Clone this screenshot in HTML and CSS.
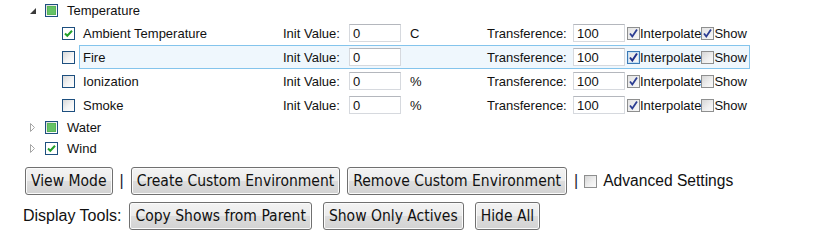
FILE: index.html
```html
<!DOCTYPE html>
<html lang="en">
<head>
<meta charset="UTF-8">
<title>Environment</title>
<link rel="stylesheet" href="styles.css">
</head>
<body>

<div class="tree">
  <div class="node">
    <div class="node-row">
      <span class="twisty"><svg width="6" height="6" viewBox="0 0 6 6"><polygon points="6,0 6,6 0,6" fill="#3a3a3a"/></svg></span>
      <span class="cb tree-cb"><span class="part"></span></span>
      <span class="node-name">Temperature</span>
    </div>
    <div class="children">
      <div class="env-row">
        <span class="cb tree-cb on"><svg width="11" height="11" viewBox="0 0 11 11"><path d="M2 5.5 L4.3 7.8 L9 2.8" fill="none" stroke="#23a02a" stroke-width="2"/></svg></span>
        <div class="env-box">
          <span class="env-name">Ambient Temperature</span>
          <span class="lbl">Init Value:</span>
          <input class="val" value="0">
          <span class="unit">C</span>
          <span class="lbl">Transference:</span>
          <input class="val" value="100">
          <span class="opts">
            <span class="cb std on"><svg width="11" height="11" viewBox="0 0 11 11"><path d="M2 5.5 L4.3 8.5 L9 1.5" fill="none" stroke="#2c3d92" stroke-width="1.8"/></svg></span>Interpolate<span class="cb std on"><svg width="11" height="11" viewBox="0 0 11 11"><path d="M2 5.5 L4.3 8.5 L9 1.5" fill="none" stroke="#2c3d92" stroke-width="1.8"/></svg></span>Show
          </span>
        </div>
      </div>
      <div class="env-row">
        <span class="cb tree-cb"></span>
        <div class="env-box sel">
          <span class="env-name">Fire</span>
          <span class="lbl">Init Value:</span>
          <input class="val" value="0">
          <span class="unit"></span>
          <span class="lbl">Transference:</span>
          <input class="val" value="100">
          <span class="opts">
            <span class="cb std on hot"><svg width="11" height="11" viewBox="0 0 11 11"><path d="M2 5.5 L4.3 8.5 L9 1.5" fill="none" stroke="#1f2f8a" stroke-width="2"/></svg></span>Interpolate<span class="cb std"></span>Show
          </span>
        </div>
      </div>
      <div class="env-row">
        <span class="cb tree-cb"></span>
        <div class="env-box">
          <span class="env-name">Ionization</span>
          <span class="lbl">Init Value:</span>
          <input class="val" value="0">
          <span class="unit">%</span>
          <span class="lbl">Transference:</span>
          <input class="val" value="100">
          <span class="opts">
            <span class="cb std on"><svg width="11" height="11" viewBox="0 0 11 11"><path d="M2 5.5 L4.3 8.5 L9 1.5" fill="none" stroke="#2c3d92" stroke-width="1.8"/></svg></span>Interpolate<span class="cb std"></span>Show
          </span>
        </div>
      </div>
      <div class="env-row">
        <span class="cb tree-cb"></span>
        <div class="env-box">
          <span class="env-name">Smoke</span>
          <span class="lbl">Init Value:</span>
          <input class="val" value="0">
          <span class="unit">%</span>
          <span class="lbl">Transference:</span>
          <input class="val" value="100">
          <span class="opts">
            <span class="cb std on"><svg width="11" height="11" viewBox="0 0 11 11"><path d="M2 5.5 L4.3 8.5 L9 1.5" fill="none" stroke="#2c3d92" stroke-width="1.8"/></svg></span>Interpolate<span class="cb std"></span>Show
          </span>
        </div>
      </div>
    </div>
  </div>
  <div class="node-row leaf">
    <span class="twisty"><svg width="6" height="9" viewBox="0 0 6 9"><polygon points="0.5,0.5 4.5,4.5 0.5,8.5" fill="#fff" stroke="#a6a6a6"/></svg></span>
    <span class="cb tree-cb"><span class="part"></span></span>
    <span class="node-name">Water</span>
  </div>
  <div class="node-row leaf">
    <span class="twisty"><svg width="6" height="9" viewBox="0 0 6 9"><polygon points="0.5,0.5 4.5,4.5 0.5,8.5" fill="#fff" stroke="#a6a6a6"/></svg></span>
    <span class="cb tree-cb on"><svg width="11" height="11" viewBox="0 0 11 11"><path d="M2 5.5 L4.3 7.8 L9 2.8" fill="none" stroke="#23a02a" stroke-width="2"/></svg></span>
    <span class="node-name">Wind</span>
  </div>
</div>

<div class="toolbar">
  <button>View Mode</button>
  <span class="sep">|</span>
  <button>Create Custom Environment</button>
  <button>Remove Custom Environment</button>
  <span class="sep">|</span>
  <span class="cb std adv"></span>
  <span class="adv-lbl">Advanced Settings</span>
</div>

<div class="toolbar tools">
  <span class="tools-lbl">Display Tools:</span>
  <button>Copy Shows from Parent</button>
  <button>Show Only Actives</button>
  <button>Hide All</button>
</div>

</body>
</html>
```

FILE: styles.css
```css
:root{
  --text:     #111;
  --cb-blue:  #1d4f7f;
  --cb-gray:  #8e8f8f;
  --sel-bg:   #eff7fd;
  --sel-line: #84c4ec;
}
*{box-sizing:border-box}
body{
  margin:0;
  font-family:"Liberation Sans",Arial,sans-serif;
  font-size:13px;
  color:var(--text);
  width:817px;
  height:240px;
  overflow:hidden;
}

/* ---------- tree ---------- */
.node-row{
  display:flex;
  align-items:center;
  height:21px;
  padding-left:29px;
}
.twisty{
  width:16px;
  display:flex;
  align-items:center;
  justify-content:flex-start;
  padding-left:1px;
}
.twisty svg{display:block}
.node-name{margin-left:9px}

.cb{
  width:13px;height:13px;
  flex:none;
  display:inline-flex;
  align-items:center;
  justify-content:center;
}
.cb svg{display:block}
.tree-cb{
  border:1px solid var(--cb-blue);
  background:linear-gradient(135deg,#d8d8d8 0%,#f4f4f4 55%,#fff 100%);
}
.tree-cb.on{background:#fff}
.tree-cb .part{
  width:9px;height:9px;
  background:#66c266;
  box-shadow:inset 0 0 0 1px #58b558;
}
.std{
  border:1px solid var(--cb-gray);
  background:linear-gradient(135deg,#d6d6d6 0%,#f0f0f0 60%,#fafafa 100%);
}
.std.on{background:linear-gradient(135deg,#e4e4e4 0%,#f7f7f7 100%)}
.std.hot{border-color:#3b79b5;box-shadow:inset 0 0 0 1px #c6e0f6}

/* ---------- environment rows ---------- */
.env-row{
  display:flex;
  align-items:center;
  height:24px;
  padding-left:62px;
}
.env-box{
  margin-left:4px;
  width:671px;
  height:24px;
  border:1px solid transparent;
  padding-left:3px;
  display:grid;
  grid-template-columns:200px 66px 52px 86px 86px 52px auto;
  align-items:center;
}
.env-box.sel{
  background:var(--sel-bg);
  border-color:var(--sel-line);
}
.val{
  width:52px;height:18px;
  border:1px solid #d6d9de;
  border-top-color:#b4b7bd;
  padding:0 3px;
  font:13px "Liberation Sans",Arial,sans-serif;
  color:var(--text);
  background:#fff;
}
.unit{padding-left:9px}
.opts{
  display:flex;
  align-items:center;
  padding-left:2px;
}

/* ---------- toolbars ---------- */
.toolbar{
  display:flex;
  align-items:center;
  height:28px;
  margin-top:8px;
  padding-left:25px;
  gap:7px;
}
.toolbar.tools{
  margin-top:7px;
  padding-left:23px;
  gap:11px;
}
.tools-lbl{font-size:16px;margin-right:-3px}
button{
  height:28px;
  padding:0 5px;
  font-family:"DejaVu Sans Condensed","DejaVu Sans",sans-serif;
  font-size:15.5px;
  color:var(--text);
  border:1px solid #707070;
  border-radius:3px;
  background:linear-gradient(#f3f3f3 0%,#ebebeb 50%,#dddddd 51%,#d2d2d2 100%);
  box-shadow:inset 0 0 0 1px #fbfbfb;
}
.sep{
  font-size:16px;
  color:#1d2330;
}
.adv{margin-left:-1px}
.adv-lbl{font-size:15.6px;margin-left:-1px}
```
